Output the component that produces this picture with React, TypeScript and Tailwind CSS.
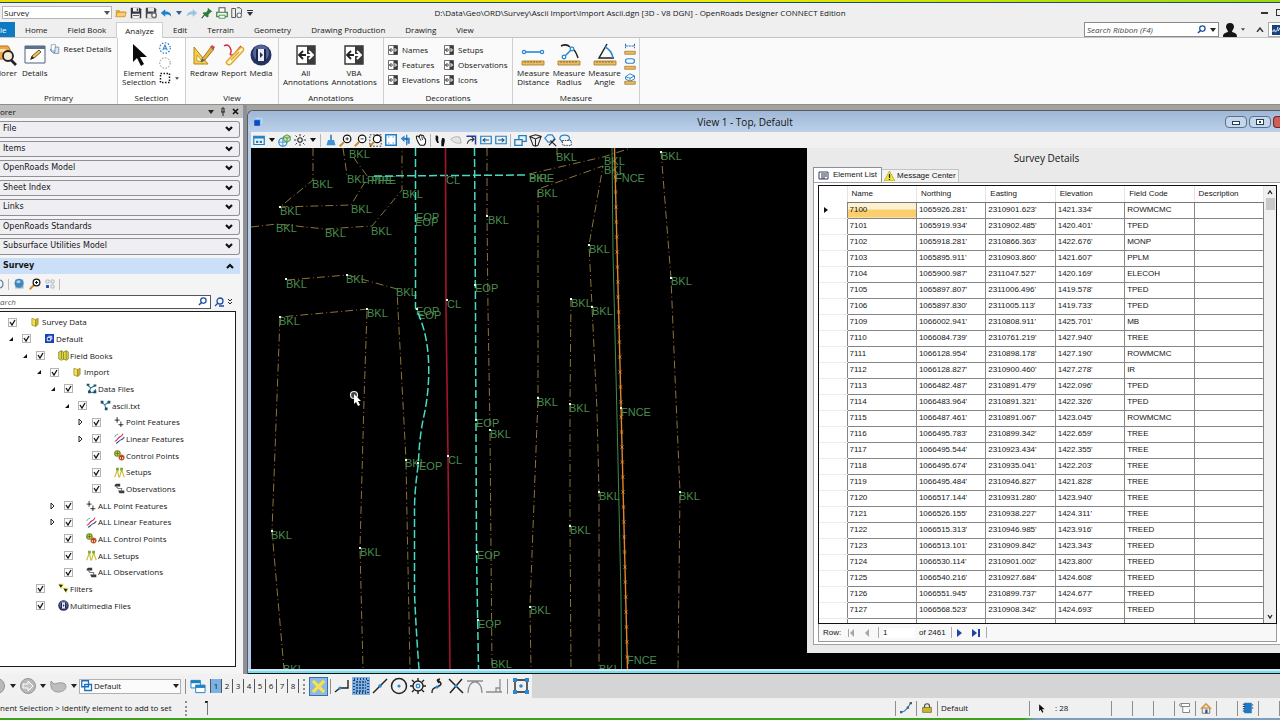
// App.tsx
import { useState } from "react";
import type { ReactNode } from "react";
import clsx from "clsx";

type IconProps = { w?: number; h?: number; box?: string; children: ReactNode };

function Icon({ w = 12, h = 12, box = "0 0 16 16", children }: IconProps) {
  return (
    <svg width={w} height={h} viewBox={box} fill="none" className="shrink-0" aria-hidden="true">
      {children}
    </svg>
  );
}

const Caret = ({ color = "#222" }: { color?: string }) => (
  <Icon w={6} h={4} box="0 0 6 4">
    <path d="M0 0h6L3 4z" fill={color} />
  </Icon>
);

/* ---------- quick access icons ---------- */

const quickIcons: { name: string; icon: ReactNode }[] = [
  {
    name: "Open",
    icon: (
      <Icon>
        <path d="M1 13V4h5l1 2h7v7z" fill="#e0a93c" />
        <path d="M1 13l2-6h12l-2 6z" fill="#f6cf74" stroke="#c98f25" />
      </Icon>
    ),
  },
  {
    name: "Save",
    icon: (
      <Icon>
        <path d="M1 1h12l2 2v12H1z" fill="#33363b" />
        <path d="M4 1h8v5H4zM3 9h10v6H3z" fill="#f2f2f2" />
        <path d="M9 2h2v3H9zM4 11h8v1H4z" fill="#33363b" />
      </Icon>
    ),
  },
  {
    name: "Save Settings",
    icon: (
      <Icon>
        <path d="M1 1h12l2 2v12H1z" fill="#44474c" />
        <path d="M4 1h8v5H4zM3 9h10v6H3z" fill="#e8e8e8" />
        <circle cx="12" cy="11" r="3" stroke="#777" strokeWidth="2" fill="#fff" />
      </Icon>
    ),
  },
  {
    name: "Undo",
    icon: (
      <Icon>
        <path d="M1 8l6-5v3c5 0 8 2 8 7-2-3-4-3-8-3v3z" fill="#1f7fd0" />
      </Icon>
    ),
  },
  { name: "Undo list", icon: <Caret color="#2b5f95" /> },
  {
    name: "Redo",
    icon: (
      <Icon>
        <path d="M15 8L9 3v3c-5 0-8 2-8 7 2-3 4-3 8-3v3z" fill="#9cc3e2" />
      </Icon>
    ),
  },
  {
    name: "Pin",
    icon: (
      <Icon>
        <path d="M9 1l6 5-2 1-3 3v3l-2 1-6-6 2-1h3l2-3z" fill="#2e7d3a" />
        <path d="M5 10l-4 5" stroke="#333" strokeWidth="1.5" />
      </Icon>
    ),
  },
  {
    name: "Print",
    icon: (
      <Icon>
        <path d="M4 7V1h8v6" stroke="#555" fill="#fff" strokeWidth="1.4" />
        <path d="M1 7h14v6H1z" stroke="#2f7d3b" strokeWidth="1.5" fill="#e9f4e8" />
        <path d="M4 11h8v4H4z" fill="#fff" stroke="#2f7d3b" />
      </Icon>
    ),
  },
  {
    name: "Preview",
    icon: (
      <Icon>
        <path d="M1 2h5v12H1zM8 1h4l2 2v6" stroke="#555" strokeWidth="1.3" />
        <circle cx="11" cy="11" r="3" stroke="#6b7a85" strokeWidth="1.6" fill="#fff" />
      </Icon>
    ),
  },
  {
    name: "Customize",
    icon: (
      <Icon w={6} h={6} box="0 0 6 6">
        <path d="M0 0h6v1H0zM0 2h6L3 6z" fill="#333" />
      </Icon>
    ),
  },
];

/* ---------- ribbon icons ---------- */

const ExplorerIcon = () => (
  <Icon w={22} h={22} box="0 0 22 22">
    <path d="M0 2h11l2 3v10H0z" fill="#f2a640" stroke="#b9731c" />
    <path d="M0 5h9v3H0z" fill="#fbe0b0" />
    <circle cx="11" cy="12" r="5" fill="#f3ead8" stroke="#222" strokeWidth="1.8" />
    <path d="M14 16l5 5" stroke="#222" strokeWidth="2.6" />
  </Icon>
);

const DetailsIcon = () => (
  <Icon w={22} h={22} box="0 0 22 22">
    <path d="M1 2h20v17H1z" fill="#fdfdfd" stroke="#51657e" />
    <path d="M1 2h20v3H1z" fill="#5b7089" />
    <path d="M7 15l1-3 7-6 2 2-7 6z" fill="#f3c63d" stroke="#333" strokeWidth=".8" />
    <path d="M6 16l2-4 2 2z" fill="#222" />
  </Icon>
);

const ArrowIcon = () => (
  <Icon w={18} h={24} box="0 0 18 24">
    <path d="M3 1v18l4-4 4 8 3-2-4-7h7z" fill="#0b0b0b" />
  </Icon>
);

const RedrawIcon = () => (
  <Icon w={22} h={22} box="0 0 22 22">
    <path d="M1 3v17h14z" fill="#f5cf4c" stroke="#b58612" />
    <path d="M4 11v6h5z" fill="#fff" stroke="#b58612" strokeWidth=".7" />
    <path d="M9 15l9-12 3 2-9 11-4 2z" fill="#eab63a" stroke="#85601a" strokeWidth=".8" />
    <path d="M17 3l2-2 3 2-2 3z" fill="#d14b4b" />
    <path d="M8 18l1-3 3 1z" fill="#2b63a5" />
  </Icon>
);

const ReportIcon = () => (
  <Icon w={22} h={22} box="0 0 22 22">
    <path d="M1 2c4-3 6 1 7 4s-3 5 1 5 5-6 9-9" stroke="#d3283b" strokeWidth="1.4" />
    <path d="M4 17L17 4c2-2 5 1 3 3L8 20c-3 2-6-1-4-3z" fill="#fdf3cd" stroke="#e0a82a" strokeWidth="1.5" />
    <path d="M8 16l8-8" stroke="#e0a82a" strokeWidth="1.5" />
  </Icon>
);

const MediaIcon = ({ size = 22 }: { size?: number }) => (
  <Icon w={size} h={size} box="0 0 22 22">
    <circle cx="11" cy="11" r="10.5" fill="#27335f" />
    <circle cx="11" cy="9" r="8" fill="#55639a" />
    <path d="M6 5h10v12H6z" fill="#e8ecf8" />
    <path d="M6 5h2v12H6zM14 5h2v12h-2z" fill="#1c2544" />
    <path d="M10 8l3 3-3 3z" fill="#27335f" />
  </Icon>
);

const AnnotationIcon = ({ size = 20 }: { size?: number }) => (
  <Icon w={size} h={size} box="0 0 20 20">
    <path d="M1 1h18v18H1z" fill="#fff" stroke="#333" strokeWidth="1.4" />
    <path d="M11 1h8v18h-8z" fill="#3b3b3b" />
    <path d="M7 6l-4 4 4 4M3 10h7" stroke="#222" strokeWidth="1.8" />
    <path d="M13 6l4 4-4 4M11 10h6" stroke="#fff" strokeWidth="1.8" />
  </Icon>
);

const Ruler = () => (
  <>
    <path d="M1 18h22v4H1z" fill="#e9bb62" stroke="#a9761f" strokeWidth=".8" />
    <path d="M4 18v2M7 18v2M10 18v2M13 18v2M16 18v2M19 18v2" stroke="#7a5312" strokeWidth=".7" />
  </>
);

const MeasureDistanceIcon = () => (
  <Icon w={24} h={24} box="0 0 24 24">
    <path d="M4 9h16" stroke="#2b86d3" strokeWidth="1.6" />
    <circle cx="3" cy="9" r="1.6" fill="#fff" stroke="#2b86d3" strokeWidth="1.3" />
    <circle cx="21" cy="9" r="1.6" fill="#fff" stroke="#2b86d3" strokeWidth="1.3" />
    <Ruler />
  </Icon>
);

const MeasureRadiusIcon = () => (
  <Icon w={24} h={24} box="0 0 24 24">
    <path d="M4 3c4-2 7-1 9 1M17 7c2 2 3 5 4 8" stroke="#222" strokeWidth="1.5" />
    <path d="M7 14l8-8" stroke="#2b86d3" strokeWidth="1.6" />
    <circle cx="7" cy="14" r="1.8" fill="#fff" stroke="#2b86d3" strokeWidth="1.3" />
    <circle cx="15" cy="6" r="1.8" fill="#fff" stroke="#2b86d3" strokeWidth="1.3" />
    <Ruler />
  </Icon>
);

const MeasureAngleIcon = () => (
  <Icon w={24} h={24} box="0 0 24 24">
    <path d="M14 1L6 15h15" stroke="#222" strokeWidth="1.5" />
    <path d="M12 4c4 2 7 5 8 11" stroke="#2b86d3" strokeWidth="1.6" />
    <Ruler />
  </Icon>
);

function SmallMeasure({ kind }: { kind: "length" | "area" | "volume" }) {
  return (
    <Icon w={12} h={12}>
      {kind === "length" && <path d="M2 1v6M14 1v6M2 4h12" stroke="#2b6fb5" strokeWidth="1.4" strokeDasharray="3 1" />}
      {kind === "area" && <rect x="2" y="1" width="12" height="6" rx="3" stroke="#2b86d3" strokeWidth="1.5" />}
      {kind === "volume" && <path d="M2 5l6-4 6 3v4l-6 3-6-3zM2 5l6 2 6-3M8 7v3" stroke="#2b86d3" strokeWidth="1.3" />}
      <path d="M1 11h14v4H1z" fill="#e9bb62" stroke="#a9761f" />
    </Icon>
  );
}

function BigButton({ icon, label }: { icon: ReactNode; label: string }) {
  return (
    <button type="button" className="flex w-max flex-col items-center whitespace-pre text-center leading-[9px]">
      <span className="flex h-[27px] items-center">{icon}</span>
      {label}
    </button>
  );
}

function RibbonGroup({ title, width, active, children }: { title: string; width: string; active?: boolean; children: ReactNode }) {
  return (
    <section className={clsx("flex shrink-0 flex-col border-r border-[#cfcfcf]", width, active && "bg-white")}>
      <div className="flex flex-1 gap-[3px] px-1 pt-[3px]">{children}</div>
      <h2 className="pb-px text-center leading-[10px]">{title}</h2>
    </section>
  );
}

function Decoration({ label }: { label: string }) {
  return (
    <button type="button" className="flex h-[15px] items-center gap-1">
      <AnnotationIcon size={10} />
      {label}
    </button>
  );
}

const tabs = ["Home", "Field Book", "Analyze", "Edit", "Terrain", "Geometry", "Drawing Production", "Drawing", "View"];

function Ribbon() {
  const [activeTab, setActiveTab] = useState("Analyze");

  return (
    <header className="bg-[#efefef]">
      {/* Title bar */}
      <div className="grid h-[19px] grid-cols-[260px_1fr_260px] items-center">
        <div className="flex items-center pl-[2px]">
          <select aria-label="Workflow" className="h-[13px] w-[110px] appearance-none border border-[#b5b5b5] bg-white pl-px leading-none" defaultValue="Survey">
            <option>Survey</option>
          </select>
          <span className="-ml-2">
            <Caret color="#555" />
          </span>
          <div className="ml-[5px] flex items-center gap-[3px]">
            {quickIcons.map((item) => (
              <button type="button" key={item.name} aria-label={item.name} className="flex min-w-2 justify-center">
                {item.icon}
              </button>
            ))}
          </div>
        </div>
        <h1 className="whitespace-nowrap text-center">
          D:\Data\Geo\ORD\Survey\Ascii Import\Import Ascii.dgn [3D - V8 DGN] - OpenRoads Designer CONNECT Edition
        </h1>
        <div className="flex items-center justify-end gap-2 overflow-hidden">
          <button type="button" aria-label="Minimize" className="h-[2px] w-[7px] bg-[#333]" />
          <button type="button" aria-label="Maximize" className="-mr-1 h-[7px] w-[8px] border border-[#333]" />
        </div>
      </div>

      {/* Tabs */}
      <nav className="flex h-[16px] items-stretch border-b border-[#c4c4c4]">
        <button type="button" className="w-[15px] bg-[#0f7ac4] pr-[10px] text-left text-white">
          le
        </button>
        {tabs.map((tab) => (
          <button
            type="button"
            key={tab}
            onClick={() => setActiveTab(tab)}
            className={clsx(tab === activeTab ? "-mb-px border border-b-0 border-[#cfcfcf] bg-white px-2" : "px-[10px]")}
          >
            {tab}
          </button>
        ))}
        <div className="ml-auto flex items-center gap-1">
          <label className="flex h-[15px] w-[135px] items-center border border-[#8b8b8b] bg-white px-[2px]">
            <input aria-label="Search Ribbon" placeholder="Search Ribbon (F4)" className="w-[110px] italic outline-none placeholder:text-[#444]" />
            <Icon w={9} h={9} box="0 0 10 10">
              <circle cx="6" cy="4" r="3" stroke="#1d4fa3" strokeWidth="1.4" />
              <path d="M4 6L1 9" stroke="#1d4fa3" strokeWidth="1.6" />
            </Icon>
            <span className="ml-1">
              <Caret />
            </span>
          </label>
          <button type="button" aria-label="User" className="flex items-center gap-1">
            <Icon w={14} h={14} box="0 0 14 14">
              <path d="M7 0c3 0 4 2 4 4S9 7 9 9c3 1 5 1 5 5H0c0-4 2-4 5-5 0-2-2-3-2-5s1-4 4-4z" fill="#151515" />
            </Icon>
            <Icon w={4} h={3} box="0 0 6 4">
              <path d="M0 0h6L3 4z" fill="#444" />
            </Icon>
          </button>
          <button type="button" aria-label="Collapse Ribbon" className="ml-[7px]">
            <Icon w={8} h={5} box="0 0 8 5">
              <path d="M1 5l3-4 3 4" stroke="#333" strokeWidth="1.4" />
            </Icon>
          </button>
          <button type="button" aria-label="Help" className="flex h-[15px] w-[12px] items-center justify-end border border-r-0 border-[#aaa] bg-white">
            <Icon w={8} h={10} box="0 0 8 10">
              <path d="M0 0h8v10H0z" fill="#16437e" />
              <path d="M1 7c0-3 2-3 2-1s2 1 3-4M6 6l2-3" stroke="#fff" />
            </Icon>
          </button>
        </div>
      </nav>

      {/* Groups */}
      <div className="flex h-[66px] bg-[#fafafa]">
        <RibbonGroup title="Primary" width="w-[118px] *:first:pl-0">
          <div className="flex w-[19px] justify-end">
            <BigButton icon={<ExplorerIcon />} label="lorer" />
          </div>
          <BigButton icon={<DetailsIcon />} label="Details" />
          <button type="button" className="flex h-[15px] items-center gap-[3px] whitespace-nowrap">
            <Icon w={10} h={10}>
              <path d="M2 1h7v10H2z" fill="#fff" stroke="#6d7f92" />
              <path d="M8 5h6v10H6l2-3z" fill="#dceaf7" stroke="#4f6b86" />
              <path d="M1 8c0 5 4 6 7 5" stroke="#2b86d3" strokeWidth="1.6" />
            </Icon>
            Reset Details
          </button>
        </RibbonGroup>
        <RibbonGroup title="Selection" width="w-[68px]" active>
          <BigButton icon={<ArrowIcon />} label={"Element\nSelection"} />
          <div className="flex flex-col gap-[3px] pt-px">
            <Icon>
              <circle cx="8" cy="8" r="7" stroke="#2b6fb5" strokeWidth="1.5" strokeDasharray="2 2" />
              <path d="M5 11l3-7 3 7M6 9h4" stroke="#2b86d3" strokeWidth="1.4" />
            </Icon>
            <Icon>
              <circle cx="8" cy="8" r="7" stroke="#777" strokeWidth="1.2" strokeDasharray="2 2" />
            </Icon>
            <div className="flex items-center gap-1">
              <Icon>
                <path d="M2 2h12v12H2z" stroke="#111" strokeWidth="2" strokeDasharray="2 2" />
              </Icon>
              <Icon w={4} h={3} box="0 0 6 4">
                <path d="M0 0h6L3 4z" fill="#444" />
              </Icon>
            </div>
          </div>
        </RibbonGroup>
        <RibbonGroup title="View" width="w-[93px]">
          <BigButton icon={<RedrawIcon />} label="Redraw" />
          <BigButton icon={<ReportIcon />} label="Report" />
          <BigButton icon={<MediaIcon />} label="Media" />
        </RibbonGroup>
        <RibbonGroup title="Annotations" width="w-[105px]">
          <BigButton icon={<AnnotationIcon />} label={"All\nAnnotations"} />
          <BigButton icon={<AnnotationIcon />} label={"VBA\nAnnotations"} />
        </RibbonGroup>
        <RibbonGroup title="Decorations" width="w-[129px]">
          <div className="flex w-[53px] flex-col pt-px">
            <Decoration label="Names" />
            <Decoration label="Features" />
            <Decoration label="Elevations" />
          </div>
          <div className="flex flex-col pt-px">
            <Decoration label="Setups" />
            <Decoration label="Observations" />
            <Decoration label="Icons" />
          </div>
        </RibbonGroup>
        <RibbonGroup title="Measure" width="w-[127px]">
          <BigButton icon={<MeasureDistanceIcon />} label={"Measure\nDistance"} />
          <BigButton icon={<MeasureRadiusIcon />} label={"Measure\nRadius"} />
          <BigButton icon={<MeasureAngleIcon />} label={"Measure\nAngle"} />
          <div className="flex flex-col gap-[3px] pt-[2px]">
            <SmallMeasure kind="length" />
            <SmallMeasure kind="area" />
            <SmallMeasure kind="volume" />
          </div>
        </RibbonGroup>
      </div>
    </header>
  );
}

/* ---------- explorer ---------- */

const treeIcons: Record<string, ReactNode> = {
  book: (
    <Icon w={10} h={10}>
      <path d="M3 2l6 2v11l-6-2z" fill="#f2e05a" stroke="#8c7b15" />
      <path d="M9 4l4-2v10l-4 3z" fill="#cdb92c" stroke="#8c7b15" />
    </Icon>
  ),
  books: (
    <Icon w={11} h={11}>
      <path d="M1 3l4-2 3 2 4-2 3 2v10l-3 2-4-2-3 2-4-2z" fill="#dfd547" stroke="#6d7a18" />
      <path d="M5 1v12M8 3v11M12 1v13" stroke="#6d7a18" />
    </Icon>
  ),
  model: (
    <Icon w={9} h={9}>
      <path d="M0 0h16v16H0z" fill="#1741b8" />
      <path d="M4 6h6v6H4zM6 4h6v6" stroke="#fff" strokeWidth="1.6" />
    </Icon>
  ),
  data: (
    <Icon w={11} h={11}>
      <path d="M2 3l5 4 6-3M7 7l-3 6 8 1 2-5" stroke="#27798c" strokeWidth="1.6" />
      <path d="M1 1h4v3H1zM11 2h4v3h-4zM3 11h4v4H3zM11 11h4v4h-4z" fill="#1d4f66" />
    </Icon>
  ),
  file: (
    <Icon w={11} h={11}>
      <path d="M2 3l5 4 6-4M7 7l2 7" stroke="#2a88a8" strokeWidth="1.6" />
      <path d="M1 1h4v4H1zM11 1h4v4h-4zM7 11h4v4H7z" fill="#1d4f66" />
    </Icon>
  ),
  point: (
    <Icon w={10} h={10}>
      <path d="M5 0v9M1 5h8M11 7v9M7 12h8" stroke="#666" strokeWidth="2" />
      <path d="M4 4h2v2H4zM10 11h2v2h-2z" fill="#222" />
    </Icon>
  ),
  linear: (
    <Icon w={11} h={11}>
      <path d="M1 12c4 0 4-5 7-6s4-2 5-5" stroke="#d02b36" strokeWidth="1.6" />
      <path d="M3 15c3-1 4-4 7-5s3-2 5-4" stroke="#333c9a" strokeWidth="1.5" />
      <path d="M1 6c1-3 3-4 5-4" stroke="#35a0a0" strokeWidth="1.2" />
    </Icon>
  ),
  control: (
    <Icon w={11} h={11}>
      <circle cx="5" cy="5" r="4" fill="#e4c333" stroke="#5c8a2a" strokeWidth="1.5" />
      <circle cx="11" cy="11" r="4" fill="#c83232" stroke="#b8952a" />
      <path d="M5 2v6M2 5h6" stroke="#3d6b1e" />
      <path d="M9 10h1v3H9zM12 10h1v3h-1z" fill="#fff" />
    </Icon>
  ),
  setup: (
    <Icon w={11} h={11}>
      <path d="M5 4L1 15M5 4l2 11M11 4L8 15M11 4l4 11" stroke="#c9bd33" strokeWidth="1.6" />
      <path d="M3 1h4v4H3zM9 1h4v4H9z" fill="#7fa52f" />
    </Icon>
  ),
  observe: (
    <Icon w={11} h={11}>
      <path d="M1 3l2-2h6v4H1zM6 11h9v4H8z" fill="#3a3a3a" />
      <path d="M3 5l3 3h5v4" stroke="#777" strokeWidth="1.6" />
    </Icon>
  ),
  filter: (
    <Icon w={11} h={11}>
      <path d="M0 1h9L6 5v4L4 7z" fill="#e8df2b" />
      <path d="M7 7h9l-3 4v4l-2-2z" fill="#e8df2b" />
      <path d="M1 2l6 1-3 4zM8 8l6 1-3 4z" fill="#222" />
    </Icon>
  ),
  media: <MediaIcon size={11} />,
};

type TreeRow = { level: number; label: string; icon: string; arrow?: "open" | "closed" };

const treeRows: TreeRow[] = [
  { level: 0, label: "Survey Data", icon: "book" },
  { level: 1, label: "Default", icon: "model", arrow: "open" },
  { level: 2, label: "Field Books", icon: "books", arrow: "open" },
  { level: 3, label: "Import", icon: "book", arrow: "open" },
  { level: 4, label: "Data Files", icon: "data", arrow: "open" },
  { level: 5, label: "ascii.txt", icon: "file", arrow: "open" },
  { level: 6, label: "Point Features", icon: "point", arrow: "closed" },
  { level: 6, label: "Linear Features", icon: "linear", arrow: "closed" },
  { level: 6, label: "Control Points", icon: "control" },
  { level: 6, label: "Setups", icon: "setup" },
  { level: 6, label: "Observations", icon: "observe" },
  { level: 4, label: "ALL Point Features", icon: "point", arrow: "closed" },
  { level: 4, label: "ALL Linear Features", icon: "linear", arrow: "closed" },
  { level: 4, label: "ALL Control Points", icon: "control" },
  { level: 4, label: "ALL Setups", icon: "setup" },
  { level: 4, label: "ALL Observations", icon: "observe" },
  { level: 2, label: "Filters", icon: "filter" },
  { level: 2, label: "Multimedia Files", icon: "media" },
];

function TreeItem({ row }: { row: TreeRow }) {
  return (
    <li className="flex items-center" style={{ paddingLeft: row.level === 0 ? 8 : row.level * 14 - 6 }}>
      {row.level > 0 && (
        <span className="w-[14px]">
          {row.arrow === "open" && (
            <Icon w={6} h={6} box="0 0 6 6">
              <path d="M5 1v4H1z" fill="#111" />
            </Icon>
          )}
          {row.arrow === "closed" && (
            <Icon w={6} h={8} box="0 0 6 8">
              <path d="M1 1l3 3-3 3z" stroke="#222" fill="#fff" />
            </Icon>
          )}
        </span>
      )}
      <label className="flex items-center">
        <span className="grid">
          <input type="checkbox" defaultChecked className="peer col-start-1 row-start-1 h-[9px] w-[9px] appearance-none border border-[#b4b4b4] bg-[#fbfbfb]" />
          <svg viewBox="0 0 9 9" className="invisible col-start-1 row-start-1 h-[9px] w-[9px] peer-checked:visible" fill="none" aria-hidden="true">
            <path d="M2 4l2 3 3-5" stroke="#111" strokeWidth="1.3" />
          </svg>
        </span>
        <span className="ml-3 mr-px flex w-[12px] justify-center">{treeIcons[row.icon]}</span>
        {row.label}
      </label>
    </li>
  );
}

const sections = ["File", "Items", "OpenRoads Model", "Sheet Index", "Links", "OpenRoads Standards", "Subsurface Utilities Model", "Survey"];

function Explorer() {
  return (
    <aside className="flex w-[243px] shrink-0 flex-col bg-[#f4f4f4]">
      <div className="flex h-[13px] items-center justify-between bg-[#bfbfbf] pr-1">
        <span>orer</span>
        <div className="flex items-center gap-[6px]">
          <Caret />
          <Icon w={6} h={9} box="0 0 6 9">
            <path d="M1 5h4M2 5V1h2v4M3 5v4" stroke="#222" />
          </Icon>
          <Icon w={7} h={7} box="0 0 7 7">
            <path d="M1 1l5 5M6 1L1 6" stroke="#111" strokeWidth="1.6" />
          </Icon>
        </div>
      </div>

      <div className="mr-[3px] grid h-[156px] grid-rows-8 gap-[3px] pt-[3px] font-['DejaVu_Sans',Verdana,sans-serif]">
        {sections.map((section) => {
          const open = section === "Survey";
          return (
            <button
              type="button"
              key={section}
              className={clsx(
                "flex items-center justify-between pl-[3px] pr-[6px] text-left",
                open ? "bg-[#cbdff8] font-bold" : "rounded-r-[3px] border border-l-0 border-[#8f8f95] bg-[#efeff3]",
              )}
            >
              {section}
              <Icon w={8} h={6} box="0 0 8 6">
                <path d={open ? "M1 5l3-3 3 3" : "M1 1l3 3 3-3"} stroke="#111" strokeWidth="2.2" />
              </Icon>
            </button>
          );
        })}
      </div>

      <div className="flex h-[20px] items-center gap-1">
        <Icon w={4} h={10} box="0 0 4 10">
          <path d="M0 1c4 1 4 7 0 8" stroke="#6d8799" strokeWidth="1.2" />
        </Icon>
        <span className="h-[11px] w-px bg-[#bbb]" />
        <Icon>
          <path d="M3 2h11v12H3z" fill="#9fb6c9" />
          <circle cx="8" cy="7" r="6" fill="#3f87bd" />
          <path d="M5 4c2-2 4-1 5 0s-1 3-3 3-3-1-2-3z" fill="#a9d3ee" />
        </Icon>
        <Icon>
          <path d="M7 9l-6 6" stroke="#d98b1d" strokeWidth="2.5" />
          <circle cx="10" cy="6" r="4.5" stroke="#111" strokeWidth="1.6" fill="#fff" />
          <path d="M8 6h4M10 4v4" stroke="#111" strokeWidth="1.4" />
        </Icon>
        <Icon w={10} h={10} box="0 0 10 10">
          <path d="M1 1h3v3H1zM6 1h3v3H6zM6 6h3v3H6z" stroke="#aaa" strokeWidth=".8" />
          <path d="M1 6h3v3H1z" fill="#2255b8" />
        </Icon>
        <span className="h-[11px] w-px bg-[#bbb]" />
      </div>

      <div className="mr-[3px] flex h-[15px] items-center gap-[3px]">
        <label className="flex h-[14px] w-[211px] items-center justify-between border border-l-0 border-[#555] bg-white pr-[3px]">
          <input aria-label="Search" placeholder="arch" className="w-[180px] italic outline-none placeholder:text-[#555]" />
          <Icon w={9} h={9} box="0 0 10 10">
            <circle cx="6" cy="4" r="3" stroke="#1d4fa3" strokeWidth="1.4" />
            <path d="M4 6L1 9" stroke="#1d4fa3" strokeWidth="1.6" />
          </Icon>
        </label>
        <Icon w={10} h={10} box="0 0 10 10">
          <circle cx="6" cy="4" r="3" stroke="#1d4fa3" strokeWidth="1.3" />
          <path d="M4 6L1 9M5 9h5" stroke="#1d4fa3" strokeWidth="1.3" />
        </Icon>
        <Icon w={6} h={7} box="0 0 6 7">
          <path d="M1 1l2 2 2-2M1 4l2 2 2-2" stroke="#222" />
        </Icon>
      </div>

      <div className="mb-[7px] mr-[7px] mt-[2px] flex-1 border border-l-0 border-[#1c1c1c] bg-white pt-[2px]">
        <ul className="grid h-[300px] grid-rows-[repeat(18,1fr)]">
          {treeRows.map((row) => (
            <TreeItem key={row.label} row={row} />
          ))}
        </ul>
      </div>
    </aside>
  );
}

/* ---------- view window ---------- */

const Magnifier = ({ children }: { children?: ReactNode }) => (
  <Icon w={13} h={13}>
    <path d="M6 10l-5 5" stroke="#d98b1d" strokeWidth="2.6" />
    <circle cx="10" cy="6" r="4.6" stroke="#111" strokeWidth="1.5" fill="#fff" />
    {children}
  </Icon>
);

const viewTools: ({ name: string; icon: ReactNode } | "caret" | "sep")[] = [
  {
    name: "View Attributes",
    icon: (
      <Icon>
        <path d="M1 3h14v11H1z" stroke="#1f7fc4" strokeWidth="1.6" />
        <path d="M1 3h14v3H1zM4 9h3v3H4zM9 9h3v3H9z" fill="#1f7fc4" />
      </Icon>
    ),
  },
  "caret",
  {
    name: "Display Style",
    icon: (
      <Icon w={13} h={13}>
        <circle cx="6" cy="10" r="5" stroke="#2b86d3" strokeWidth="1.4" />
        <path d="M1 10h10M6 5v10" stroke="#2b86d3" />
        <path d="M7 3l4-2 4 2v5l-4 2-4-2z" fill="#bfe3a8" stroke="#3f8a35" />
        <path d="M7 3l4 2 4-2M11 5v5" stroke="#3f8a35" />
      </Icon>
    ),
  },
  {
    name: "Brightness",
    icon: (
      <Icon>
        <circle cx="8" cy="8" r="3" stroke="#333" strokeWidth="1.5" />
        <path d="M8 0v3M8 13v3M0 8h3M13 8h3M2 2l2 2M12 12l2 2M14 2l-2 2M4 12l-2 2" stroke="#333" strokeWidth="1.3" />
      </Icon>
    ),
  },
  "caret",
  "sep",
  {
    name: "Update View",
    icon: (
      <Icon>
        <path d="M7 1h2v7H7z" fill="#2b6fb5" />
        <path d="M4 8h8l2 7H2z" fill="#3c93d6" />
      </Icon>
    ),
  },
  { name: "Zoom In", icon: <Magnifier><path d="M8 6h4M10 4v4" stroke="#111" /></Magnifier> },
  { name: "Zoom Out", icon: <Magnifier><path d="M8 6h4" stroke="#111" /></Magnifier> },
  { name: "Window Area", icon: <Magnifier><path d="M1 1h14v14H1z" stroke="#111" strokeDasharray="2 2" /></Magnifier> },
  {
    name: "Fit View",
    icon: (
      <Icon>
        <path d="M1 1h14v14H1z" stroke="#1f7fc4" strokeWidth="2" fill="#fff" />
        <path d="M4 4h2M10 4h2M4 12h2M10 12h2" stroke="#1f7fc4" />
      </Icon>
    ),
  },
  {
    name: "Rotate View",
    icon: (
      <Icon>
        <path d="M1 6l5-4v3h7v8h-3V8H6v3z" fill="#2b86d3" />
        <path d="M9 1v14" stroke="#1d5fa3" strokeWidth="1.4" />
      </Icon>
    ),
  },
  {
    name: "Pan View",
    icon: (
      <Icon>
        <path d="M2 3c2-1 3 1 4 2-1-3 1-5 3-3 2-1 3 1 3 3 3 1 3 8 0 10H7C5 13 1 6 2 3z" fill="#fff" stroke="#111" strokeWidth="1.4" />
        <path d="M6 5l2 4M9 3l1 5" stroke="#111" />
      </Icon>
    ),
  },
  "sep",
  {
    name: "Walk",
    icon: (
      <Icon w={13} h={13}>
        <path d="M2 2c3-1 4 2 3 5l1 4H4L2 7zM10 5c3-1 4 2 3 5l-1 5h-3V9z" fill="#111" />
      </Icon>
    ),
  },
  {
    name: "Fly",
    icon: (
      <Icon>
        <path d="M1 7c3-3 7-4 12-3l2 8c-5 1-9 0-14-5z" fill="#e4e4e0" stroke="#a5a59c" />
      </Icon>
    ),
  },
  {
    name: "Navigate",
    icon: (
      <Icon>
        <path d="M2 3h12v11" stroke="#1d3fa8" strokeWidth="2" />
        <path d="M3 13c1-5 4-6 8-6M9 4l3 3-3 3" stroke="#333" strokeWidth="1.5" />
      </Icon>
    ),
  },
  {
    name: "View Previous",
    icon: (
      <Icon>
        <path d="M1 3h14v10H1z" stroke="#1f7fc4" strokeWidth="1.6" />
        <path d="M12 8H4M7 6L4 8l3 3" stroke="#1d4f85" strokeWidth="1.4" />
      </Icon>
    ),
  },
  {
    name: "View Next",
    icon: (
      <Icon>
        <path d="M1 3h14v10H1z" stroke="#1f7fc4" strokeWidth="1.6" />
        <path d="M4 8h8M9 6l3 2-3 3" stroke="#1d4f85" strokeWidth="1.4" />
      </Icon>
    ),
  },
  "sep",
  {
    name: "Copy View",
    icon: (
      <Icon w={13} h={13}>
        <path d="M1 7h9v7H1zM6 7V2h9v7h-5" stroke="#1f7fc4" strokeWidth="1.6" />
      </Icon>
    ),
  },
  {
    name: "Clip Volume",
    icon: (
      <Icon w={13} h={13}>
        <path d="M1 3l7-2 7 2-4 11-3 1-3-1zM8 6v9M1 3l7 3 7-3" stroke="#222" strokeWidth="1.3" />
      </Icon>
    ),
  },
  {
    name: "Clip Mask",
    icon: (
      <Icon w={13} h={13}>
        <path d="M1 5l4-4h5l3 4-3 5H5z" stroke="#2b86d3" strokeWidth="1.5" />
        <path d="M6 14l8-8M8 8l7 7" stroke="#222" strokeWidth="1.4" />
      </Icon>
    ),
  },
  {
    name: "Section",
    icon: (
      <Icon w={13} h={13}>
        <path d="M1 6c0-6 12-6 12 0L9 10H4z" stroke="#2b86d3" strokeWidth="1.5" />
        <path d="M4 8h11v6H5z" stroke="#222" strokeDasharray="2 1" fill="#fff" />
      </Icon>
    ),
  },
];

// breaklines in window coordinates
const breaklines = [
  "313,148 313,180 280,207 351,205 368,177 356,161 350,150",
  "343,148 347,175",
  "251,227 277,224 325,229 372,226 402,190 402,148",
  "287,280 347,275 397,289 398,310 406,460 407,516 410,669",
  "368,309 280,317 272,531 284,669",
  "367,311 364,400 360,548 363,669",
  "487,148 487,215 488,310 490,430 492,669",
  "538,190 538,398 530,607 531,669",
  "529,174 603,157 628,149",
  "541,188 603,166 589,245 592,306 597,410 599,492 599,669",
  "557,148 557,155",
  "571,299 570,404 570,526 571,669",
  "661,151 671,278 676,400 680,492 678,669",
];

const pointLabels: [string, number, number][] = [
  ["BKL", 349, 158], ["BKL", 312, 188], ["BKL", 347, 183], ["PIPE", 367, 184], ["PIPE", 371, 184], ["CL", 446, 184],
  ["BKL", 402, 198], ["BKL", 280, 215], ["BKL", 351, 213], ["EOP", 416, 221], ["EOP", 415, 226], ["BKL", 488, 224],
  ["BKL", 276, 232], ["BKL", 325, 237], ["BKL", 371, 235], ["BKL", 286, 288], ["BKL", 346, 283], ["BKL", 396, 296],
  ["EOP", 475, 292], ["CL", 447, 308], ["EOP", 416, 315], ["EOP", 418, 319], ["BKL", 279, 325], ["BKL", 367, 317],
  ["BKL", 556, 161], ["BKL", 529, 182], ["PIPE", 529, 182], ["BKL", 537, 197], ["BKL", 604, 165], ["BKL", 604, 174],
  ["FNCE", 615, 182], ["BKL", 661, 160], ["BKL", 589, 253], ["BKL", 671, 285], ["BKL", 571, 307], ["BKL", 592, 315],
  ["EOP", 476, 427], ["BKL", 490, 438], ["BKL", 537, 406], ["BKL", 569, 412], ["FNCE", 621, 416], ["BKL", 405, 467],
  ["EOP", 419, 470], ["CL", 448, 464], ["BKL", 271, 539], ["BKL", 360, 556], ["EOP", 477, 559], ["BKL", 570, 534],
  ["BKL", 599, 500], ["BKL", 679, 500], ["BKL", 530, 614], ["EOP", 478, 628], ["BKL", 491, 668], ["FNCE", 627, 664],
  ["BKL", 283, 673], ["BKL", 599, 673],
];

const whitePoints: [number, number][] = [
  [286, 279], [347, 275], [280, 317], [367, 309], [406, 460], [418, 463], [447, 300], [448, 456], [475, 285], [476, 420],
  [490, 430], [417, 309], [477, 552], [478, 620], [272, 531], [360, 548], [538, 398], [570, 404], [570, 526], [599, 492],
  [680, 492], [530, 607], [621, 408], [571, 299], [592, 307], [671, 278], [589, 245], [661, 152], [487, 216], [280, 207],
];

const fenceTicks = Array.from({ length: 33 }, (_, i) => 177 + i * 15);

function Drawing() {
  return (
    <svg className="block h-full w-full bg-black" role="img" aria-label="View 1">
      <g transform="translate(-251 -148)">
        <g fill="none" stroke="#8d7438" strokeWidth="1" strokeDasharray="8 3 1 3">
          {breaklines.map((points) => (
            <polyline key={points} points={points} />
          ))}
        </g>
        <g fontFamily="'Liberation Sans', Arial, sans-serif" fontSize="11" fill="#4a8c50">
          {pointLabels.map(([text, x, y]) => (
            <text key={`${text}-${x}-${y}`} x={x} y={y}>
              {text}
            </text>
          ))}
        </g>
        {/* edge of pavement */}
        <g fill="none" stroke="#45dcc4" strokeWidth="1.5" strokeDasharray="8 3">
          <path d="M415.5 148V308Q427 330 428.5 360T423 420Q419 441 418.500 463Q414.500 490 414.500 510V593Q416 630 419 669" />
          <path d="M474.5 148L475.5 310L476.5 552L478.5 669" />
          <path d="M374 176L528 175" />
        </g>
        <path d="M445.5 148L446 310L448 456L449 567L450 669" fill="none" stroke="#a5142a" strokeWidth="1.6" />
        <path d="M612 148L613 253L616 376L617 417L621 597L621.5 669" fill="none" stroke="#3d8d4c" />
        <path d="M614.5 148L621 405L627.5 669" fill="none" stroke="#e0842f" strokeWidth="1.4" />
        {fenceTicks.map((y) => {
          const x = 614.5 + (y - 148) * 0.025;
          return <path key={y} d={`M${x - 1.5} ${y - 1.5}l3 3m0-3l-3 3`} stroke="#e0842f" />;
        })}
        {whitePoints.map(([x, y]) => (
          <rect key={`${x}-${y}`} x={x - 1} y={y - 1} width="2" height="2" fill="#e9f5ef" />
        ))}
        {/* pointer */}
        <circle cx="354" cy="395" r="3.5" fill="#444" stroke="#eee" strokeWidth="1.2" />
        <path d="M354 394v10l2-2 2 4 2-1-2-4h3z" fill="#fff" />
      </g>
    </svg>
  );
}

type Point = [string, string, string, string, string];

const surveyPoints: Point[] = [
  ["7100", "1065926.281'", "2310901.623'", "1421.334'", "ROWMCMC"],
  ["7101", "1065919.934'", "2310902.485'", "1420.401'", "TPED"],
  ["7102", "1065918.281'", "2310866.363'", "1422.676'", "MONP"],
  ["7103", "1065895.911'", "2310903.860'", "1421.607'", "PPLM"],
  ["7104", "1065900.987'", "2311047.527'", "1420.169'", "ELECOH"],
  ["7105", "1065897.807'", "2311006.496'", "1419.578'", "TPED"],
  ["7106", "1065897.830'", "2311005.113'", "1419.733'", "TPED"],
  ["7109", "1066002.941'", "2310808.911'", "1425.701'", "MB"],
  ["7110", "1066084.739'", "2310761.219'", "1427.940'", "TREE"],
  ["7111", "1066128.954'", "2310898.178'", "1427.190'", "ROWMCMC"],
  ["7112", "1066128.827'", "2310900.460'", "1427.278'", "IR"],
  ["7113", "1066482.487'", "2310891.479'", "1422.096'", "TPED"],
  ["7114", "1066483.964'", "2310891.321'", "1422.326'", "TPED"],
  ["7115", "1066487.461'", "2310891.067'", "1423.045'", "ROWMCMC"],
  ["7116", "1066495.783'", "2310899.342'", "1422.659'", "TREE"],
  ["7117", "1066495.544'", "2310923.434'", "1422.355'", "TREE"],
  ["7118", "1066495.674'", "2310935.041'", "1422.203'", "TREE"],
  ["7119", "1066495.484'", "2310946.827'", "1421.828'", "TREE"],
  ["7120", "1066517.144'", "2310931.280'", "1423.940'", "TREE"],
  ["7121", "1066526.155'", "2310938.227'", "1424.311'", "TREE"],
  ["7122", "1066515.313'", "2310946.985'", "1423.916'", "TREED"],
  ["7123", "1066513.101'", "2310909.842'", "1423.343'", "TREED"],
  ["7124", "1066530.114'", "2310901.002'", "1423.800'", "TREED"],
  ["7125", "1066540.216'", "2310927.684'", "1424.608'", "TREED"],
  ["7126", "1066551.945'", "2310899.737'", "1424.677'", "TREED"],
  ["7127", "1066568.523'", "2310908.342'", "1424.693'", "TREED"],
  ["7128", "1066576.639'", "2310908.101'", "1423.656'", "TREED"],
];

function SurveyDetails() {
  return (
    <section className="mb-4 flex w-[473px] shrink-0 flex-col bg-[#eaeaea] pl-[6px]">
      <h2 className="flex h-[19px] items-center justify-center text-[10px]">Survey Details</h2>
      <div className="flex h-[15px] items-end">
        <button type="button" className="flex h-[15px] items-center gap-1 border border-b-0 border-[#8c9099] bg-white px-[4px] font-['Liberation_Sans',Arial,sans-serif]">
          <Icon w={11} h={9} box="0 0 11 9">
            <path d="M1 1h9v7H1z" stroke="#333a7a" fill="#fff" />
            <path d="M3 3h6M3 5h6M3 7h4" stroke="#333" />
          </Icon>
          Element List
        </button>
        <button type="button" className="flex h-[13px] items-center gap-[2px] border border-b-0 border-l-0 border-[#c4c4c4] bg-[#f3f3f3] px-[2px] font-['Liberation_Sans',Arial,sans-serif]">
          <Icon w={11} h={10} box="0 0 11 10">
            <path d="M5.5 0L11 10H0z" fill="#f1e52f" stroke="#9c931a" strokeWidth=".6" />
            <path d="M5.5 3v4M5.5 8v1" stroke="#222" strokeWidth="1.2" />
          </Icon>
          Message Center
        </button>
      </div>

      <div className="mb-2 flex min-h-0 flex-1 flex-col border border-r-0 border-[#a2a2a2] bg-white py-[2px] pl-1 pr-[3px] font-['Liberation_Sans',Arial,sans-serif]">
        <div className="flex min-h-0 flex-1 overflow-hidden border border-[#111]">
          <div className="min-w-0 flex-1 overflow-hidden">
            <table className="w-full table-fixed border-collapse">
              <colgroup>
                <col className="w-[28px]" />
                <col span={6} />
              </colgroup>
              <thead>
                <tr className="h-[16px]">
                  <th aria-label="Current row" />
                  {["Name", "Northing", "Easting", "Elevation", "Field Code", "Description"].map((head) => (
                    <th key={head} className="border-x border-b border-x-[#e4e4e4] border-b-[#777] p-0 pl-1 text-left font-normal">
                      {head}
                    </th>
                  ))}
                </tr>
              </thead>
              <tbody>
                {surveyPoints.map((point, i) => (
                  <tr key={point[0]} className="h-[16px]">
                    <td className="border-b border-[#ececec] p-0">
                      {i === 0 && (
                        <span className="flex justify-start pl-[5px]">
                          <Icon w={4} h={6} box="0 0 4 6">
                            <path d="M0 0l4 3-4 3z" fill="#111" />
                          </Icon>
                        </span>
                      )}
                    </td>
                    {[...point, ""].map((value, col) => (
                      <td
                        key={col}
                        className={clsx(
                          "border border-[#858585] p-0 pl-[2px] leading-none",
                          i === 0 && col === 0 && "bg-linear-to-b from-[#fdf1cf] from-45% to-[#f8cf6c] to-50%",
                        )}
                      >
                        {value}
                      </td>
                    ))}
                  </tr>
                ))}
              </tbody>
            </table>
          </div>
          <div className="flex w-[12px] flex-col items-center bg-[#f0f0f0] py-1">
            <Icon w={6} h={5} box="0 0 6 5">
              <path d="M1 4l2-3 2 3" stroke="#222" strokeWidth="1.3" />
            </Icon>
            <span className="mt-[3px] h-[12px] w-[9px] bg-[#c8c8c8]" />
            <span className="mt-auto">
              <Icon w={6} h={5} box="0 0 6 5">
                <path d="M1 1l2 3 2-3" stroke="#222" strokeWidth="1.3" />
              </Icon>
            </span>
          </div>
        </div>
        <div className="flex h-[18px] items-center border border-t-0 border-[#9a9a9a] bg-[#f8f8f8] pl-1">
          <label htmlFor="row" className="w-[24px]">
            Row:
          </label>
          <Icon w={9} h={8} box="0 0 9 8">
            <path d="M1 0h1v8H1zM7 0v8L3 4z" fill="#a5a5a5" />
          </Icon>
          <span className="ml-[9px]">
            <Icon w={5} h={8} box="0 0 5 8">
              <path d="M4 0v8L0 4z" fill="#a5a5a5" />
            </Icon>
          </span>
          <span className="ml-2 h-[11px] w-px bg-[#aaa]" />
          <input id="row" defaultValue="1" className="mx-1 w-[32px] bg-white outline-none" />
          <span className="w-[32px]">of 2461</span>
          <span className="h-[11px] w-px bg-[#aaa]" />
          <button type="button" aria-label="Next row" className="ml-[5px]">
            <Icon w={5} h={8} box="0 0 5 8">
              <path d="M0 0v8l5-4z" fill="#2142a8" />
            </Icon>
          </button>
          <button type="button" aria-label="Last row" className="ml-[10px]">
            <Icon w={8} h={8} box="0 0 8 8">
              <path d="M0 0v8l5-4zM6 0h2v8H6z" fill="#2142a8" />
            </Icon>
          </button>
          <span className="ml-[6px] h-[11px] w-px bg-[#aaa]" />
        </div>
      </div>
    </section>
  );
}

function ViewWindow() {
  return (
    <main className="mt-[5px] flex min-w-0 flex-1 flex-col rounded-tl-md border-l border-t border-[#555b66] bg-[#b4cbe6]">
      <div className="grid h-[21px] grid-cols-[1fr_auto_1fr] items-center rounded-tl-md bg-linear-to-b from-[#9fb8d6] to-[#bbd0ea] pt-px">
        <span className="pl-[5px]">
          <Icon w={10} h={10}>
            <path d="M2 4l3-2h9v9l-3 3H2z" fill="#7cc4f4" />
            <path d="M2 5h9v9H2z" fill="#1247c0" />
            <path d="M4 2h10v9" stroke="#e9f6ff" />
          </Icon>
        </span>
        <h2 className="pr-[38px] text-[10px]">View 1 - Top, Default</h2>
        <div className="flex items-center justify-end gap-[2px]">
          <button type="button" aria-label="Minimize view" className="flex h-[12px] w-[22px] items-center justify-center rounded-sm border border-[#56708f] bg-[#c5d6ea]">
            <span className="mt-[2px] h-[4px] w-[8px] border border-[#2b3d55] bg-white" />
          </button>
          <button type="button" aria-label="Restore view" className="flex h-[12px] w-[22px] items-center justify-center rounded-sm border border-[#56708f] bg-[#c5d6ea]">
            <span className="flex h-[6px] w-[8px] items-center justify-center border border-[#2b3d55] bg-white">
              <span className="h-[2px] w-[2px] bg-[#2b3d55]" />
            </span>
          </button>
          <button type="button" aria-label="Close view" className="h-[12px] w-[7px] rounded-l-sm border border-r-0 border-[#7a2020] bg-[#cc5f5b]" />
        </div>
      </div>
      <div className="ml-[3px] flex h-[16px] items-center bg-[#f1f1f1]">
        {viewTools.map((tool, i) => {
          if (tool === "caret")
            return (
              <span key={i} className="flex w-[11px] justify-center">
                <Caret color="#111" />
              </span>
            );
          if (tool === "sep") return <span key={i} className="mx-[2px] h-[13px] w-px bg-[#b5b5b5]" />;
          return (
            <button type="button" key={i} aria-label={tool.name} className="flex w-[15px] justify-center">
              {tool.icon}
            </button>
          );
        })}
      </div>
      <div className="ml-[3px] flex min-h-0 flex-1 bg-black">
        <div className="min-w-0 flex-1">
          <Drawing />
        </div>
        <SurveyDetails />
      </div>
      <div className="h-[4px] border-b-2 border-[#6fe3f0] bg-[#d8e4f4]" />
      <div className="h-px bg-[#111]" />
    </main>
  );
}

/* ---------- bottom bars ---------- */

const Sep = () => <span className="h-[15px] w-px shrink-0 bg-[#8e8e8e]" />;

const Grip = () => <span className="h-[15px] shrink-0 border-l-2 border-dotted border-[#8e8e8e]" />;

const snapModes: { name: string; icon: ReactNode }[] = [
  { name: "Near", icon: <><path d="M2 15l5-4h8V3" stroke="#222" strokeWidth="1.4" /><circle cx="7" cy="11" r="1.6" fill="#2b86d3" /></> },
  { name: "Keypoint", icon: <><path d="M0 0h18v18H0z" fill="#7fb0e0" /><path d="M2 2h14v14H2z" stroke="#1d3f75" strokeWidth="2" strokeDasharray="1 2" /><path d="M4 5h10M4 8h10M4 11h10M4 14h10" stroke="#1d3f75" strokeWidth="1.6" strokeDasharray="2 1" /></> },
  { name: "Midpoint", icon: <><path d="M2 16L16 2" stroke="#222" strokeWidth="1.4" /><circle cx="9" cy="9" r="1.8" fill="#2b86d3" /></> },
  { name: "Center", icon: <><circle cx="9" cy="9" r="7.5" stroke="#222" strokeWidth="1.5" /><circle cx="9" cy="9" r="1.6" fill="#2b86d3" /></> },
  { name: "Origin", icon: <><circle cx="9" cy="9" r="5" stroke="#222" strokeWidth="1.4" /><circle cx="9" cy="9" r="1.8" stroke="#2b86d3" strokeWidth="1.3" /><path d="M9 1v3M9 14v3M1 9h3M14 9h3M3 3l2 2M13 13l2 2M15 3l-2 2M5 13l-2 2" stroke="#222" strokeWidth="1.4" /></> },
  { name: "Nearest", icon: <><path d="M4 16c-1-7 8-5 9-9 0-2-2-3-4-4M9 3l3-1M9 3l2 3" stroke="#222" strokeWidth="1.4" /><circle cx="9" cy="10" r="1.6" fill="#2b86d3" /></> },
  { name: "Intersection", icon: <><path d="M2 2l14 14M15 2L3 16" stroke="#222" strokeWidth="1.5" /><circle cx="9" cy="9" r="1.6" fill="#2b86d3" /></> },
  { name: "Tangent", icon: <path d="M1 4h16M2 16c0-15 14-15 14 0" stroke="#8e8e8e" strokeWidth="1.3" /> },
  { name: "Perpendicular", icon: <path d="M1 15h16M15 15V2M11 15v-4h4" stroke="#8e8e8e" strokeWidth="1.3" /> },
];

function ToolBar() {
  const [activeView, setActiveView] = useState(1);

  return (
    <div className="flex h-[24px] bg-[#d5d5d5]">
      <div className="flex items-center gap-1 bg-[#f1f1f1] pr-[2px]">
        <div className="flex w-[75px] items-center gap-1">
          <Icon w={6} h={16} box="0 0 6 16">
            <circle cx="-3" cy="8" r="7.5" fill="#b9b9b9" stroke="#949494" />
          </Icon>
          <Caret />
          <Icon w={16} h={16}>
            <circle cx="8" cy="8" r="7.5" fill="#b9b9b9" stroke="#949494" />
            <path d="M3 6h5V3l5 5-5 5v-3H3z" stroke="#fff" fill="#c4c4c4" />
          </Icon>
          <Caret />
          <Icon w={17} h={14} box="0 0 17 14">
            <path d="M1 2l3 3c4-1 8-2 11 0 3 5-2 8-7 8S0 10 1 2z" fill="#bdbdbd" stroke="#999" />
          </Icon>
          <Caret />
        </div>
        <div className="flex h-[15px] w-[102px] items-center border border-[#b0b0b0] bg-[#fbfbfb] px-px">
          <Icon>
            <path d="M1 1h9v8H1zM5 6h9v8H5z" stroke="#1f6fc0" strokeWidth="1.7" fill="#fff" />
          </Icon>
          <select aria-label="View Group" className="flex-1 appearance-none bg-transparent pl-px outline-none" defaultValue="Default">
            <option>Default</option>
          </select>
          <Caret />
        </div>
        <Sep />
        <Icon w={16} h={15} box="0 0 17 15">
          <path d="M1 1h10v8H1z" fill="#fff" stroke="#1f7fc4" />
          <path d="M1 1h10v3H1z" fill="#1f7fc4" />
          <path d="M6 6h10v8H6z" fill="#fff" stroke="#1f7fc4" />
          <path d="M6 6h10v3H6z" fill="#1f7fc4" />
        </Icon>
        <div className="flex h-[14px] border-l border-[#555]">
          {[1, 2, 3, 4, 5, 6, 7, 8].map((view) => (
            <button
              type="button"
              key={view}
              onClick={() => setActiveView(view)}
              className={clsx("w-[11px] border-r border-[#555]", view === activeView && "bg-[#79b2e6]")}
            >
              {view}
            </button>
          ))}
        </div>
        <Grip />
        <div className="flex items-center gap-[2px]">
          <button type="button" aria-label="AccuSnap" className="flex h-[19px] w-[19px] items-center justify-center border border-[#3a6ea5] bg-[#8db9e4]">
            <Icon w={15} h={15}>
              <path d="M2 2l12 12M14 2L2 14" stroke="#f6e24a" strokeWidth="3.5" />
            </Icon>
          </button>
          <Sep />
          <div className="flex gap-px">
            {snapModes.map((mode) => (
              <button type="button" key={mode.name} aria-label={mode.name} className="flex w-[18px] justify-center">
                <Icon w={18} h={18} box="0 0 18 18">
                  {mode.icon}
                </Icon>
              </button>
            ))}
          </div>
        </div>
        <Sep />
        <Icon w={18} h={18} box="0 0 18 18">
          <path d="M3 3h12v12H3z" stroke="#222" strokeWidth="1.4" />
          <circle cx="9" cy="9" r="1.8" fill="#2b86d3" />
          <path d="M1 1h4v4H1zM13 1h4v4h-4zM1 13h4v4H1zM13 13h4v4h-4z" fill="#2b86d3" />
        </Icon>
      </div>
    </div>
  );
}

function StatusBar() {
  return (
    <footer className="flex h-[20px] items-center bg-[#f0f0f0]">
      <span className="w-[185px] overflow-hidden whitespace-nowrap">nent Selection &gt; Identify element to add to set</span>
      <Grip />
      <span className="ml-[18px] h-[14px] w-[3px] border-r border-t-2 border-r-[#777] border-t-[#222]" />
      <div className="ml-auto flex items-center">
        <Sep />
        <span className="flex w-[20px] justify-center">
          <Icon>
            <path d="M1 14l5-2 5-5 3-6" stroke="#2b86d3" strokeWidth="1.6" />
            <path d="M0 12h3v3H0zM13 0h3v3h-3zM9 6h3v3H9z" fill="#556" />
          </Icon>
        </span>
        <Sep />
        <span className="flex w-[20px] justify-center">
          <Icon w={10} h={10}>
            <path d="M4 8V5c0-5 8-5 8 0v3" stroke="#444" strokeWidth="1.8" />
            <path d="M1 7h14v8H1z" fill="#c9b92c" stroke="#5e5510" />
          </Icon>
        </span>
        <Sep />
        <span className="w-[91px] pl-[3px]">Default</span>
        <Sep />
        <span className="flex w-[81px] items-center gap-[10px] pl-[8px]">
          <Icon w={7} h={11} box="0 0 18 24">
            <path d="M3 1v18l4-4 4 8 3-2-4-7h7z" fill="#0b0b0b" />
          </Icon>
          : 28
        </span>
        <Sep />
        <span className="w-[20px]" />
        <Sep />
        <span className="w-[20px]" />
        <Sep />
        <span className="w-[20px]" />
        <Sep />
        <span className="flex w-[20px] justify-center">
          <Icon>
            <path d="M3 2h11v4H3zM5 6v8h9v-4M3 2c-3 0-3 4 0 4" stroke="#777" fill="#fff" strokeWidth="1.2" />
          </Icon>
        </span>
        <Sep />
        <span className="flex w-[20px] justify-center">
          <Icon>
            <path d="M3 8h10v7H3z" fill="#f7f3e4" stroke="#555" />
            <path d="M0 9l8-8 8 8h-3L8 4 3 9z" fill="#e0982b" />
            <path d="M7 10h3v5H7z" fill="#2a4e90" />
          </Icon>
        </span>
        <Sep />
        <span className="w-[20px]" />
        <Sep />
        <span className="flex w-[20px] justify-center">
          <Icon>
            <path d="M3 1h10v14H3z" fill="#1f78c4" />
            <path d="M1 3h3M1 6h3M1 9h3M1 12h3M13 4h2M13 8h2" stroke="#123f6b" strokeWidth="1.5" />
          </Icon>
        </span>
        <Sep />
        <span className="w-[20px]" />
        <Sep />
      </div>
    </footer>
  );
}

export default function App() {
  return (
    <div className="flex h-screen flex-col overflow-hidden bg-[#a3a29d] font-['Open_Sans','Noto_Sans',sans-serif] text-[8px] font-medium leading-[10px] text-[#151515]">
      <div className="h-[3px] border-b border-[#1c4d6b] bg-linear-to-r from-[#e8e000] via-[#f2ec00] to-[#9bd80a]" />
      <Ribbon />
      <div className="h-px bg-[#8f8f8a]" />
      <div className="flex min-h-0 flex-1">
        <Explorer />
        <div className="w-[4px] bg-[#8d9097]" />
        <ViewWindow />
      </div>
      <ToolBar />
      <StatusBar />
      <div className="h-[2px] bg-linear-to-r from-[#3fa01c] from-80% to-[#7c9fbd] to-81%" />
    </div>
  );
}
